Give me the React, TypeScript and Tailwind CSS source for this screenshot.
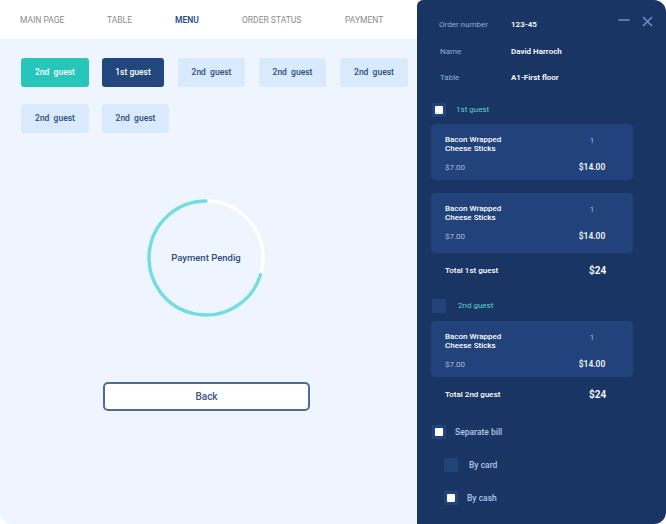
import React from 'react';

const navItems = [
  { label: 'MAIN PAGE', w: 'w-[87px]' },
  { label: 'TABLE', w: 'w-[68px]' },
  { label: 'MENU', w: 'w-[67px]' },
  { label: 'ORDER STATUS', w: 'w-[103px]' },
  { label: 'PAYMENT', w: 'w-[60px]' },
];

const Checkbox = ({ checked }: { checked?: boolean }) => (
  <div className="flex h-[14px] w-[14px] shrink-0 items-center justify-center bg-[#21437a]">
    {checked && <div className="h-[8px] w-[8px] rounded-[1px] bg-white" />}
  </div>
);

const ItemCard = ({ h }: { h: string }) => (
  <div className={`flex w-[202px] rounded-[4px] bg-[#21427a] pl-[14px] pr-[16px] pt-[11px] ${h}`}>
    <div className="flex-1">
      <p className="text-[8px] font-medium leading-[9px] text-white">
        Bacon Wrapped
        <br />
        Cheese Sticks
      </p>
      <p className="mt-[10px] text-[8px] leading-[10px] text-[#a9bedf]">$7.00</p>
    </div>
    <div className="flex w-[50px] flex-col items-center">
      <p className="mt-[1px] text-[8px] leading-[10px] text-[#9fb8e4]">1</p>
      <p className="mt-[16px] text-[8.5px] font-medium leading-[10px] text-white">$14.00</p>
    </div>
  </div>
);

const Total = ({ label }: { label: string }) => (
  <div className="flex w-[202px] items-center pl-[14px]">
    <p className="flex-1 text-[8px] font-medium leading-[14px] text-white">{label}</p>
    <p className="w-[44px] text-[10px] font-semibold leading-[14px] text-white">$24</p>
  </div>
);

const lightBtn = 'h-[29px] rounded-[3px] bg-[#d8eafc] text-[8.5px] font-medium text-[#2d4c7f]';

export default function App() {
  return (
    <div className="flex h-[524px] w-[666px] bg-white font-['Roboto',sans-serif]">
      {/* left: nav + guests */}
      <div className="flex w-[417px] flex-col">
        <div className="flex h-[39px] items-center pl-[20px] pt-[2px] text-[8.5px] text-[#8a8a8a]">
          {navItems.map((n) => (
            <span
              key={n.label}
              className={`${n.w} ${n.label === 'MENU' ? 'font-semibold text-[#2b4d85]' : ''}`}
            >
              {n.label}
            </span>
          ))}
        </div>

        <div className="flex flex-1 flex-col rounded-bl-[12px] bg-[#eff5fe] pl-[21px] pt-[19px]">
          <div className="flex gap-[14px]">
            <button className="h-[29px] w-[68px] rounded-[3px] bg-[#27c6ba] text-[8.5px] font-medium text-white">
              2nd&nbsp; guest
            </button>
            <button className="-ml-[1px] h-[29px] w-[62px] rounded-[3px] bg-[#22467e] text-[8.5px] font-medium text-white">
              1st guest
            </button>
            <button className={`${lightBtn} w-[67px]`}>2nd&nbsp; guest</button>
            <button className={`${lightBtn} w-[67px]`}>2nd&nbsp; guest</button>
            <button className={`${lightBtn} w-[68px]`}>2nd&nbsp; guest</button>
          </div>
          <div className="mt-[17px] flex gap-[13px]">
            <button className={`${lightBtn} w-[68px]`}>2nd&nbsp; guest</button>
            <button className={`${lightBtn} w-[67px]`}>2nd&nbsp; guest</button>
          </div>

          {/* payment pending ring */}
          <div className="relative ml-[126px] mt-[66px] flex h-[118px] w-[118px] items-center justify-center">
            <svg width="118" height="118" viewBox="0 0 118 118" className="absolute inset-0">
              <circle cx="59" cy="59" r="57" fill="none" stroke="#ffffff" strokeWidth="3.5" />
              <path
                d="M 59 2 A 57 57 0 1 0 113.5 75.7"
                fill="none"
                stroke="#74dce3"
                strokeWidth="3.5"
                strokeLinecap="round"
              />
            </svg>
            <span className="relative text-[9.5px] font-medium text-[#2f4b7c]">Payment Pendig</span>
          </div>

          <button className="ml-[82px] mt-[65px] h-[29px] w-[207px] rounded-[5px] border-2 border-[#4d6a98] bg-white text-[10px] font-medium text-[#3a5586]">
            Back
          </button>
        </div>
      </div>

      {/* right: order panel */}
      <div className="flex flex-1 flex-col rounded-tl-[6px] rounded-r-[12px] bg-[#183563] pl-[14px] pt-[19px]">
        <div className="flex items-start">
          <div className="flex flex-col pl-[8px] text-[8px] leading-[12px]">
            <div className="flex">
              <span className="w-[72px] text-[#8fb0de]">Order number</span>
              <span className="font-semibold text-white">123-45</span>
            </div>
            <div className="mt-[15px] flex">
              <span className="w-[72px] pl-[1px] text-[#8fb0de]">Name</span>
              <span className="font-semibold text-white">David Harroch</span>
            </div>
            <div className="mt-[14px] flex">
              <span className="w-[72px] pl-[1px] text-[#8fb0de]">Table</span>
              <span className="font-semibold text-white">A1-First floor</span>
            </div>
          </div>
          <div className="ml-auto mr-[13px] mt-[-4px] flex items-center gap-[12px]">
            <svg width="12" height="12" viewBox="0 0 12 12">
              <line x1="0.5" y1="5" x2="11.5" y2="5" stroke="#6f90cc" strokeWidth="1.5" />
            </svg>
            <svg width="11" height="11" viewBox="0 0 11 11">
              <path d="M1 1 L10 10 M10 1 L1 10" stroke="#6f90cc" strokeWidth="1.5" />
            </svg>
          </div>
        </div>

        <div className="mt-[19px] flex items-center gap-[10px] pl-[1px]">
          <Checkbox checked />
          <span className="text-[8px] text-[#63d0d8]">1st guest</span>
        </div>
        <div className="mt-[7px]">
          <ItemCard h="h-[56px]" />
        </div>
        <div className="mt-[13px]">
          <ItemCard h="h-[60px]" />
        </div>
        <div className="mt-[11px]">
          <Total label="Total 1st guest" />
        </div>

        <div className="mt-[21px] flex items-center gap-[12px] pl-[1px]">
          <Checkbox />
          <span className="text-[8px] text-[#63d0d8]">2nd guest</span>
        </div>
        <div className="mt-[8px]">
          <ItemCard h="h-[56px]" />
        </div>
        <div className="mt-[11px]">
          <Total label="Total 2nd guest" />
        </div>

        <div className="mt-[23px] flex items-center gap-[9px] pl-[1px]">
          <Checkbox checked />
          <span className="text-[8.5px] font-medium text-[#b4c6e6]">Separate bill</span>
        </div>
        <div className="mt-[19px] flex items-center gap-[11px] pl-[13px]">
          <Checkbox />
          <span className="text-[8.5px] font-medium text-[#b4c6e6]">By card</span>
        </div>
        <div className="mt-[19px] flex items-center gap-[9px] pl-[13px]">
          <Checkbox checked />
          <span className="text-[8.5px] font-medium text-[#b4c6e6]">By cash</span>
        </div>
      </div>
    </div>
  );
}
